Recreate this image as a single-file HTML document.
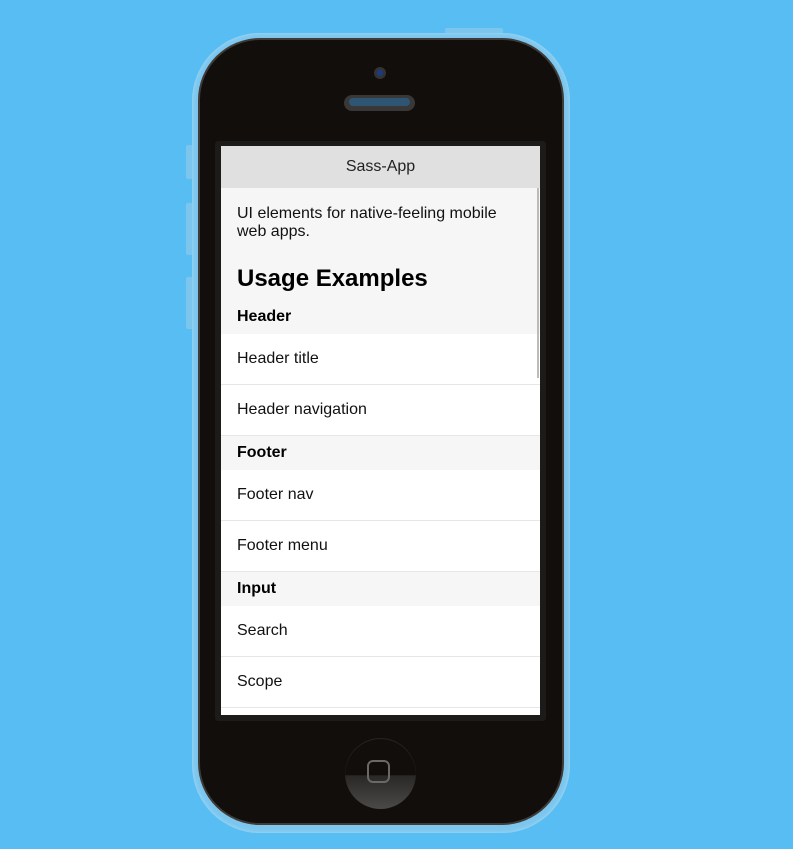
<!DOCTYPE html>
<html><head><style>
body{margin:0;width:793px;height:849px;background:#57bdf3;position:relative;overflow:hidden;font-family:"Liberation Sans",sans-serif}
.rim{position:absolute;left:192px;top:33px;width:378px;height:800px;border-radius:68px;background:#7cc6ee;box-shadow:inset 0 0 4px #a9dcf5}
.body{position:absolute;left:200px;top:40px;width:362px;height:783px;border-radius:60px;background:#110e0b;box-shadow:0 0 0 2px #3e3b38}
.btn{position:absolute;background:#7cc6ee;border-radius:2px}
.bez{position:absolute;left:215px;top:141px;width:331px;height:580px;background:#1c1b1a;border-radius:3px}
.scr{position:absolute;left:221px;top:146px;width:319px;height:569px;background:#f6f6f6;overflow:hidden}
.hd{height:42px;background:#dfe0df;text-align:center;line-height:42px;font-size:16px;color:#222}
.p{padding:17px 16px 0;font-size:16px;line-height:18px;color:#111}
h2{margin:0;padding:23px 16px 6px;font-size:24px;line-height:30px;color:#000}
.sec{height:34px;line-height:34px;padding-left:16px;font-weight:bold;font-size:16px}
.it{height:50px;line-height:50px;padding-left:16px;font-size:16px;background:#fff;border-bottom:1px solid #e6e6e6;color:#111}
.sb{position:absolute;left:537px;top:188px;width:2px;height:190px;background:#bbb}
</style></head><body>
<div class="btn" style="left:445px;top:28px;width:58px;height:8px"></div>
<div class="btn" style="left:186px;top:145px;width:8px;height:34px"></div>
<div class="btn" style="left:186px;top:203px;width:8px;height:52px"></div>
<div class="btn" style="left:186px;top:277px;width:8px;height:52px"></div>
<div class="rim"></div>
<div class="body"></div>
<div style="position:absolute;left:374px;top:67px;width:12px;height:12px;border-radius:50%;background:#333"><div style="margin:3px;width:6px;height:6px;border-radius:50%;background:#1b3a8a"></div></div>
<div style="position:absolute;left:344px;top:95px;width:71px;height:16px;border-radius:8px;background:#3a3836"><div style="margin:3px 5px;height:8px;border-radius:4px;background:#2f5575"></div></div>
<div class="bez"></div>
<div class="scr">
<div class="hd">Sass-App</div>
<div class="p">UI elements for native-feeling mobile web apps.</div>
<h2>Usage Examples</h2>
<div class="sec">Header</div>
<div class="it">Header title</div>
<div class="it">Header navigation</div>
<div class="sec">Footer</div>
<div class="it">Footer nav</div>
<div class="it">Footer menu</div>
<div class="sec">Input</div>
<div class="it">Search</div>
<div class="it">Scope</div>
<div class="it"></div>
</div>
<div class="sb"></div>
<div style="position:absolute;left:345px;top:738px;width:71px;height:71px;border-radius:50%;background:linear-gradient(#110e0b 0,#110e0b 52%,#2a2827 53%,#4b4948 100%);box-shadow:inset 0 1px 1px #2a2725"></div>
<div style="position:absolute;left:367px;top:760px;width:23px;height:23px;border:2px solid #6b6967;border-radius:6px;box-sizing:border-box"></div>
</body></html>
